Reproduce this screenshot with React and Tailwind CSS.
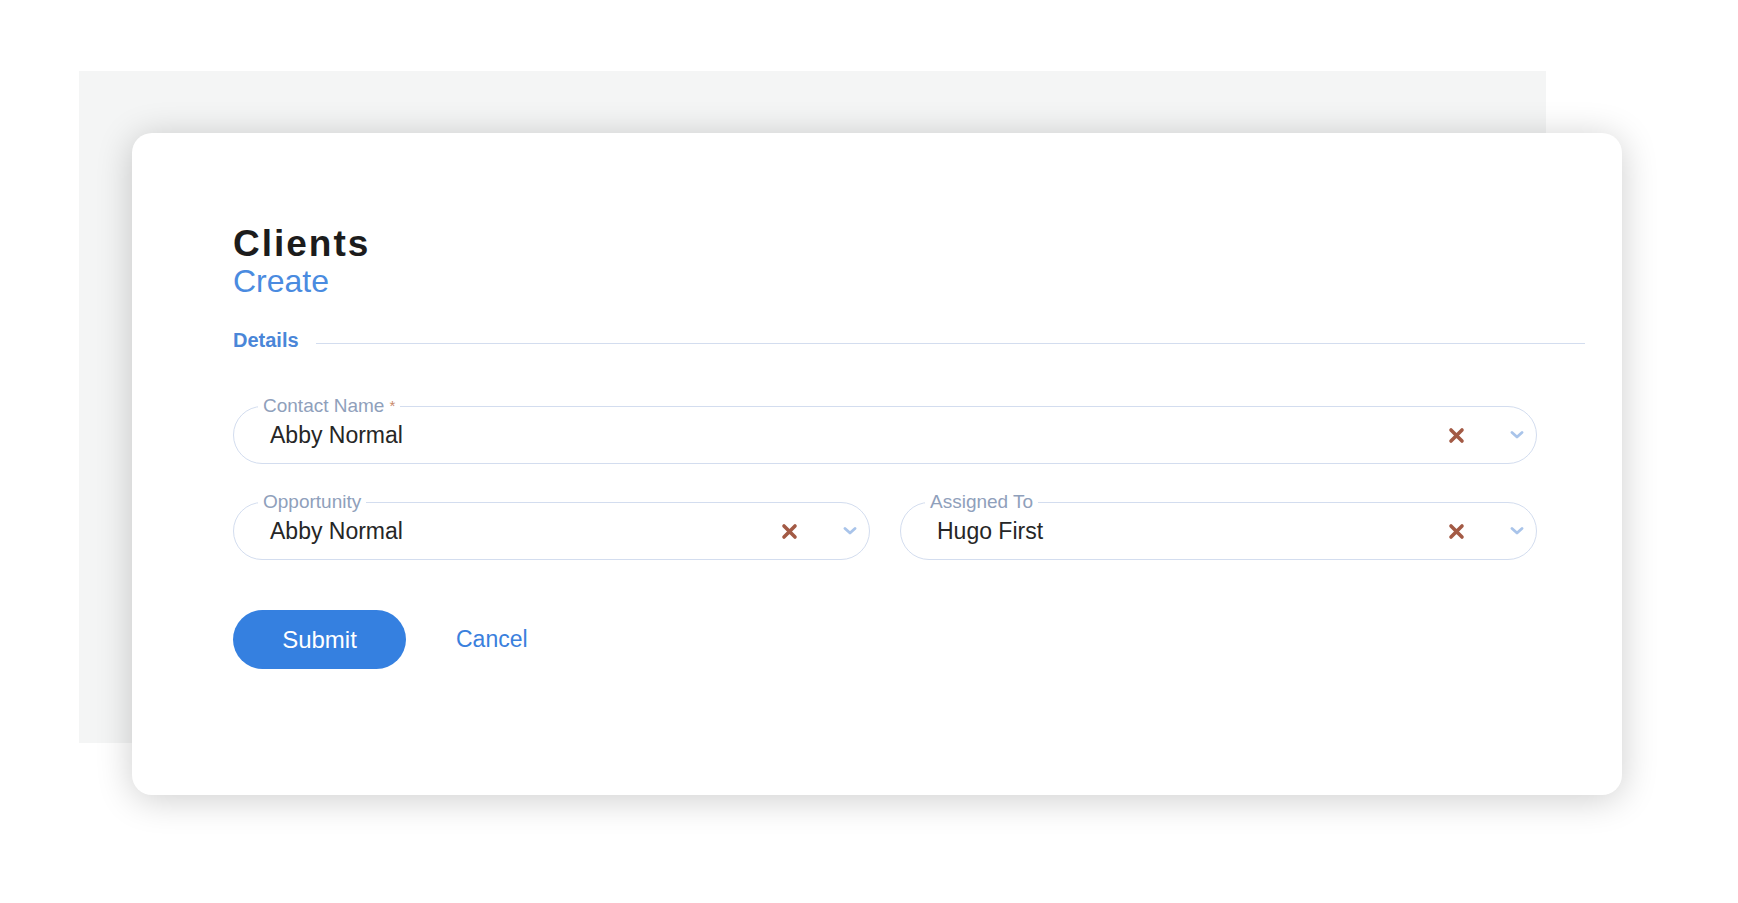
const font = { fontFamily: '"Liberation Sans", Arial, sans-serif' }

// Bold "x" used to clear a select's value
const ClearIcon = () => (
  <svg width="17" height="17" viewBox="0 0 17 17" className="shrink-0">
    <path d="M3 3 L14 14 M14 3 L3 14" stroke="#a35a45" strokeWidth="3.6" strokeLinecap="round" />
  </svg>
)

const Chevron = () => (
  <svg width="14" height="8" viewBox="0 0 14 8" className="shrink-0">
    <path d="M2 1.5 L7 6 L12 1.5" fill="none" stroke="#a9c4ea" strokeWidth="2.8" strokeLinecap="round" strokeLinejoin="round" />
  </svg>
)

const SelectField = ({ label, value, required }) => (
  <div className="relative h-[58px] rounded-full border border-[#d3ddef] flex items-center pl-[36px] pr-[12px]">
    <span className="absolute left-[24px] top-[-12px] bg-white px-[5px] text-[19px] leading-[22px] text-[#8fa0bb]">
      {label}
      {required && <span className="text-[#c98a6a] text-[15px] align-top ml-[5px]">*</span>}
    </span>
    <span className="flex-1 text-[23px] text-[#262626]">{value}</span>
    <div className="flex items-center gap-[45px]">
      <ClearIcon />
      <Chevron />
    </div>
  </div>
)

export default function App() {
  return (
    <div className="w-full h-[903px] bg-white overflow-hidden pt-[71px] pl-[79px]" style={font}>
      <div className="w-[1467px] h-[672px] bg-[#f4f5f5] pt-[62px] pl-[53px]">
        <div className="w-[1490px] h-[662px] bg-white rounded-[20px] shadow-[0_4px_36px_rgba(0,0,0,0.2)] pt-[91px] pl-[101px] pr-[37px]">
          <h1 className="text-[37px] leading-[39px] font-bold tracking-[2px] text-[#1c1c1c]">Clients</h1>
          <div className="text-[32px] leading-[36px] text-[#4a8be0]">Create</div>

          <div className="mt-[29px] flex items-center gap-[17px]">
            <span className="text-[20px] leading-[24px] font-bold text-[#4a86d8]">Details</span>
            <div className="flex-1 h-px bg-[#d3ddef] mt-[6px]" />
          </div>

          <div className="mt-[54px] mr-[48px] flex flex-col gap-[38px]">
            <SelectField label="Contact Name" value="Abby Normal" required />
            <div className="grid grid-cols-2 gap-[30px]">
              <SelectField label="Opportunity" value="Abby Normal" />
              <SelectField label="Assigned To" value="Hugo First" />
            </div>
          </div>

          <div className="mt-[50px] flex items-center gap-[50px]">
            <button className="w-[173px] h-[59px] rounded-full bg-[#3580e0] text-white text-[24px]">Submit</button>
            <button className="text-[23px] text-[#3a80dd]">Cancel</button>
          </div>
        </div>
      </div>
    </div>
  )
}
